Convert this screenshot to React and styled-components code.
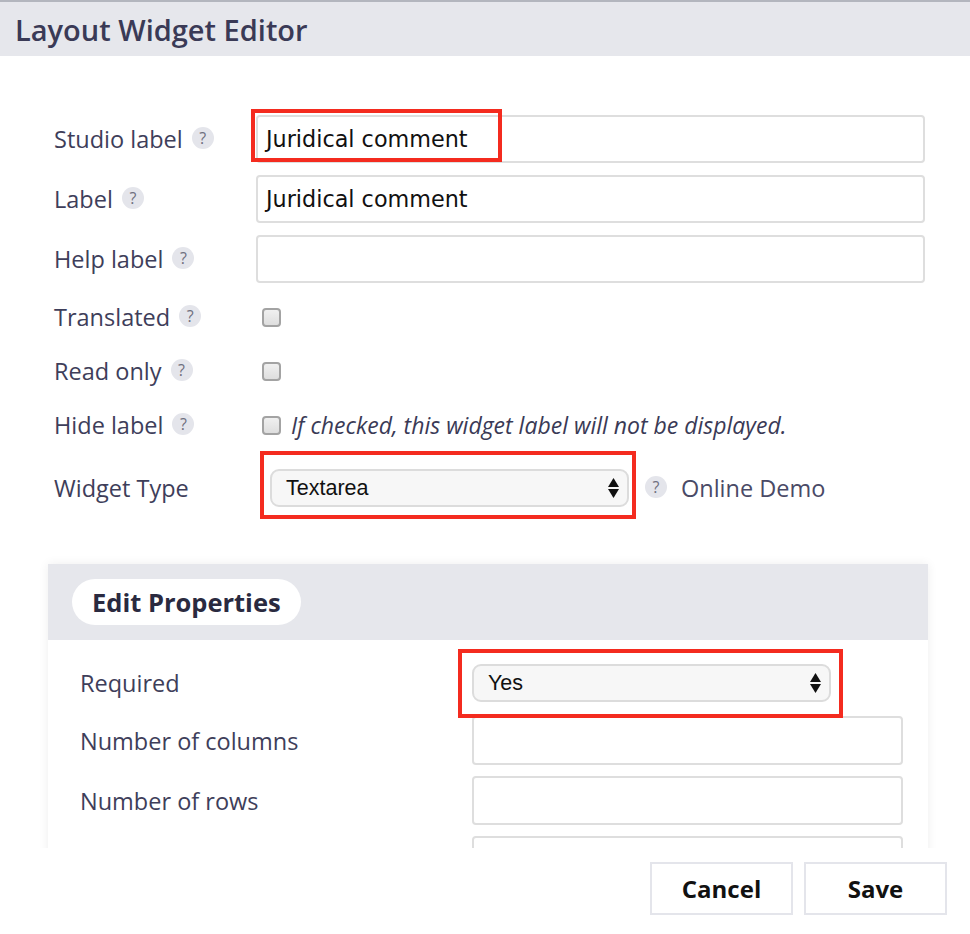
import React from 'react';
import styled, { createGlobalStyle } from 'styled-components';

const GlobalStyle = createGlobalStyle`
	html, body {
		margin: 0;
		padding: 0;
		background: #fff;
	}
	body {
		font-family: 'Open Sans', 'Noto Sans', sans-serif;
		color: #3c3c58;
	}
`;

const Modal = styled.div`
	width: 970px;
	height: 934px;
	display: flex;
	flex-direction: column;
	background: #fff;
	overflow: hidden;
`;

const Header = styled.div`
	height: 54px;
	flex: none;
	display: flex;
	align-items: center;
	padding-left: 15px;
	border-top: 2px solid #b3b6be;
	background: #e6e7ec;
	font-size: 29px;
	font-weight: 600;
	color: #3a3a56;
`;

const Scroll = styled.div`
	flex: 1;
	overflow: hidden;
	padding: 59px 42px 0 48px;
`;

const Form = styled.div`
	padding-right: 3px;
`;

const Row = styled.div`
	display: grid;
	grid-template-columns: ${(p) => p.$labelWidth || '208px'} 1fr;
	align-items: center;
	height: ${(p) => p.$height || '48px'};
	margin-bottom: ${(p) => p.$gap || '12px'};
`;

const Label = styled.div`
	display: flex;
	align-items: center;
	padding-left: ${(p) => p.$indent || '6px'};
	font-size: 23.5px;
	color: #3e3e5a;
	white-space: nowrap;
`;

const Help = styled.span`
	display: inline-flex;
	align-items: center;
	justify-content: center;
	flex: none;
	width: 22px;
	height: 22px;
	margin-left: ${(p) => p.$left || '9px'};
	margin-top: -3px;
	border-radius: 50%;
	background: #e4e5eb;
	color: #6f6f7e;
	font-family: 'Open Sans', sans-serif;
	font-size: 16px;
	font-weight: 400;
	line-height: 1;
`;

const Control = styled.div`
	display: flex;
	align-items: center;
	height: 100%;
`;

const Input = styled.div`
	box-sizing: border-box;
	width: 100%;
	height: ${(p) => p.$height || '48px'};
	display: flex;
	align-items: center;
	padding: 0 8px;
	border: 2px solid #dedede;
	border-radius: 4px;
	background: #fff;
	font-family: 'DejaVu Sans', sans-serif;
	font-size: 22.3px;
	color: #111;
`;

const Select = styled.div`
	box-sizing: border-box;
	width: 359px;
	height: 38px;
	display: flex;
	align-items: center;
	justify-content: space-between;
	margin-left: ${(p) => p.$left || '0'};
	padding: 0 8px 0 14px;
	border: 2px solid #dcdcdc;
	border-radius: 9px;
	background: #f7f7f7;
	font-family: 'Liberation Sans', Arial, sans-serif;
	font-size: 21.5px;
	color: #111;
`;

const Arrows = styled.span`
	display: flex;
	flex-direction: column;
	gap: 2px;
`;

const Highlight = styled.div`
	position: relative;
	display: flex;
	align-items: center;
	width: ${(p) => (p.$full ? '100%' : 'auto')};

	&::after {
		content: '';
		position: absolute;
		top: ${(p) => p.$top}px;
		left: ${(p) => p.$left}px;
		width: ${(p) => p.$w}px;
		height: ${(p) => p.$h}px;
		box-sizing: border-box;
		border: 4px solid #f42b1f;
		pointer-events: none;
	}
`;

const Checkbox = styled.span`
	box-sizing: border-box;
	flex: none;
	width: 19px;
	height: 19px;
	margin-left: 6px;
	border: 2px solid #a3a3a3;
	border-radius: 4px;
	background: linear-gradient(#f0f0f0, #dedede);
`;

const Hint = styled.span`
	margin-left: 10px;
	font-size: 23px;
	font-style: italic;
	color: #3a3a56;
	white-space: nowrap;
`;

const DemoLink = styled.span`
	margin-left: 14px;
	font-size: 23.5px;
	color: #4a4a66;
	white-space: nowrap;
`;

const Panel = styled.div`
	margin-top: 45px;
	background: #fff;
	box-shadow: 0 0 10px rgba(0, 0, 0, 0.07);
`;

const PanelHeader = styled.div`
	height: 76px;
	display: flex;
	align-items: center;
	padding-left: 24px;
	background: #e6e7ec;
`;

const Pill = styled.div`
	height: 46px;
	display: flex;
	align-items: center;
	padding: 0 20px;
	border-radius: 23px;
	background: #fff;
	font-size: 25.5px;
	font-weight: 700;
	color: #2a2a40;
`;

const PanelBody = styled.div`
	padding: 24px 25px 20px 32px;
`;

const Footer = styled.div`
	height: 86px;
	flex: none;
	display: flex;
	justify-content: flex-end;
	align-items: flex-start;
	gap: 11px;
	padding: 14px 23px 0 0;
	box-sizing: border-box;
	background: #fff;
`;

const Button = styled.button`
	width: 143px;
	height: 53px;
	border: 2px solid #e4e5eb;
	background: #fff;
	font-family: 'Open Sans', sans-serif;
	font-size: 24px;
	font-weight: 700;
	color: #111;
	cursor: pointer;
`;

const UpDown = () => (
	<Arrows>
		<svg width='11' height='9' viewBox='0 0 11 9'>
			<path d='M5.5 0 L11 9 L0 9 Z' fill='#111' />
		</svg>
		<svg width='11' height='9' viewBox='0 0 11 9'>
			<path d='M0 0 L11 0 L5.5 9 Z' fill='#111' />
		</svg>
	</Arrows>
);

const FieldLabel = ({ children, help, helpLeft, indent }) => (
	<Label $indent={indent}>
		{children}
		{help && <Help $left={helpLeft}>?</Help>}
	</Label>
);

const App = () => {
	return (
		<>
			<GlobalStyle />
			<Modal>
				<Header>Layout Widget Editor</Header>
				<Scroll>
					<Form>
						<Row>
							<FieldLabel help>Studio label</FieldLabel>
							<Highlight $full $top={-6} $left={-5} $w={251} $h={53}>
								<Input>Juridical comment</Input>
							</Highlight>
						</Row>
						<Row>
							<FieldLabel help>Label</FieldLabel>
							<Input>Juridical comment</Input>
						</Row>
						<Row $gap='12px'>
							<FieldLabel help>Help label</FieldLabel>
							<Input />
						</Row>
						<Row $height='44px' $gap='10px'>
							<FieldLabel help>Translated</FieldLabel>
							<Control>
								<Checkbox />
							</Control>
						</Row>
						<Row $height='44px' $gap='10px'>
							<FieldLabel help>Read only</FieldLabel>
							<Control>
								<Checkbox />
							</Control>
						</Row>
						<Row $height='44px' $gap='10px'>
							<FieldLabel help>Hide label</FieldLabel>
							<Control>
								<Checkbox />
								<Hint>If checked, this widget label will not be displayed.</Hint>
							</Control>
						</Row>
						<Row $height='62px' $gap='0'>
							<FieldLabel>Widget Type</FieldLabel>
							<Control>
								<Highlight $top={-18} $left={4} $w={376} $h={68}>
									<Select $left='14px'>
										Textarea
										<UpDown />
									</Select>
								</Highlight>
								<Help $left='16px'>?</Help>
								<DemoLink>Online Demo</DemoLink>
							</Control>
						</Row>
					</Form>

					<Panel>
						<PanelHeader>
							<Pill>Edit Properties</Pill>
						</PanelHeader>
						<PanelBody>
							<Row $labelWidth='392px' $height='38px' $gap='14px'>
								<FieldLabel indent='0'>Required</FieldLabel>
								<Highlight $top={-15} $left={-14} $w={385} $h={69}>
									<Select>
										Yes
										<UpDown />
									</Select>
								</Highlight>
							</Row>
							<Row $labelWidth='392px' $height='49px' $gap='11px'>
								<FieldLabel indent='0'>Number of columns</FieldLabel>
								<Input $height='49px' />
							</Row>
							<Row $labelWidth='392px' $height='49px' $gap='11px'>
								<FieldLabel indent='0'>Number of rows</FieldLabel>
								<Input $height='49px' />
							</Row>
							<Row $labelWidth='392px' $height='49px' $gap='11px'>
								<FieldLabel indent='0' />
								<Input $height='49px' />
							</Row>
						</PanelBody>
					</Panel>
				</Scroll>
				<Footer>
					<Button>Cancel</Button>
					<Button>Save</Button>
				</Footer>
			</Modal>
		</>
	);
};

export default App;
